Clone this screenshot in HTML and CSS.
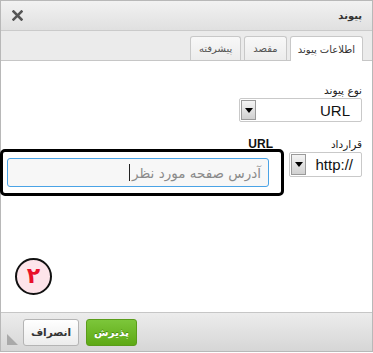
FILE: index.html
```html
<!DOCTYPE html>
<html lang="fa" dir="rtl">
<head>
<meta charset="utf-8">
<link rel="stylesheet" href="styles.css">
</head>
<body>
<div class="dialog">
  <div class="title">
    <span class="title-text">پیوند</span>
    <span class="close">
      <svg width="11" height="11" viewBox="0 0 11 11"><path d="M1.5 1.5L9.5 9.5M9.5 1.5L1.5 9.5" stroke="#555" stroke-width="2.5" stroke-linecap="square"/></svg>
    </span>
  </div>
  <div class="tabs">
    <div class="tab active">اطلاعات پیوند</div>
    <div class="tab">مقصد</div>
    <div class="tab">پیشرفته</div>
  </div>
  <div class="content">
    <div class="label">نوع پیوند</div>
    <div class="select type-select">
      <span class="select-value">URL</span>
      <span class="arrow"><svg width="8" height="5" viewBox="0 0 8 5"><path d="M0 0H8L4 5Z" fill="#000"/></svg></span>
    </div>
    <div class="row">
      <div class="col-proto">
        <div class="label">قرارداد</div>
        <div class="select proto-select">
          <span class="select-value">http://</span>
          <span class="arrow"><svg width="8" height="5" viewBox="0 0 8 5"><path d="M0 0H8L4 5Z" fill="#000"/></svg></span>
        </div>
      </div>
      <div class="col-url">
        <div class="label label-url">URL</div>
        <div class="input"><span class="placeholder">آدرس صفحه مورد نظر</span><span class="caret"></span></div>
      </div>
    </div>
    <div class="highlight"></div>
    <div class="badge">۲</div>
  </div>
  <div class="footer">
    <div class="btn ok">پذیرش</div>
    <div class="btn cancel">انصراف</div>
    <span class="grip"></span>
  </div>
</div>
</body>
</html>
```
FILE: styles.css
```css
html, body {
  margin: 0;
  padding: 0;
  background: #fff;
}
body {
  font-family: "DejaVu Sans", sans-serif;
  font-size: 11px;
  color: #333;
}
.dialog {
  direction: rtl;
  width: 371px;
  height: 350px;
  border: 1px solid #b8b8b8;
  background: #ebebeb;
  display: flex;
  flex-direction: column;
  position: relative;
}
.title {
  height: 29px;
  border-bottom: 1px solid #cacaca;
  background: linear-gradient(#f2f2f2, #e0e0e0);
  display: flex;
  align-items: center;
  padding: 0 10px 0 11px;
}
.title-text {
  font-weight: bold;
  font-size: 10px;
  color: #333;
}
.close {
  margin-right: auto;
  display: flex;
  width: 11px;
  height: 11px;
}
.tabs {
  height: 24px;
  padding-top: 5px;
  padding-right: 9px;
  display: flex;
  align-items: flex-end;
  gap: 3px;
  border-bottom: 1px solid #c6c6c6;
  background: #ebebeb;
}
.tab {
  height: 23px;
  padding: 0 8px;
  border: 1px solid #c8c8c8;
  border-bottom: none;
  border-radius: 3px 3px 0 0;
  background: linear-gradient(#f8f8f8, #ececec);
  color: #555;
  font-size: 10px;
  display: flex;
  align-items: center;
}
.tab.active {
  height: 24px;
  padding: 0 7px;
  background: #fff;
  color: #333;
  margin-bottom: -1px;
}
.content {
  flex: 1;
  background: #fff;
  padding: 21px 10px 0 6px;
  position: relative;
  border-bottom: 1px solid #c6c6c6;
}
.label {
  height: 16px;
  line-height: 16px;
  font-size: 10.5px;
  color: #222;
}
.select {
  box-sizing: border-box;
  border: 1px solid #c9c9c9;
  border-radius: 2px;
  background: #fff;
  display: flex;
  align-items: center;
  padding: 1px;
}
.type-select {
  width: 123px;
  height: 24px;
}
.select-value {
  direction: ltr;
  unicode-bidi: isolate;
  font-family: "Liberation Sans", Arial, sans-serif;
  font-size: 15px;
  color: #111;
  padding-right: 7px;
}
.type-select .select-value {
  padding-right: 10px;
}
.arrow {
  margin-right: auto;
  width: 15px;
  height: 100%;
  box-sizing: border-box;
  border: 1px solid #9a9a9a;
  background: linear-gradient(#f4f4f4, #d0d0d0);
  display: flex;
  align-items: center;
  justify-content: center;
}
.row {
  display: flex;
  gap: 16px;
  margin-top: 14px;
}
.col-proto {
  width: 73px;
}
.proto-select {
  width: 73px;
  height: 25px;
}
.col-url {
  width: 266px;
}
.label-url {
  font-family: "Liberation Sans", Arial, sans-serif;
  font-weight: bold;
  font-size: 12px;
  color: #111;
}
.input {
  box-sizing: border-box;
  width: 262px;
  height: 29px;
  margin-top: 6px;
  margin-right: 4px;
  border: 1px solid #4aa3e6;
  border-radius: 3px;
  background: #f7f7f7;
  display: flex;
  align-items: center;
  padding-right: 7px;
}
.placeholder {
  font-size: 13.5px;
  color: #8a8a8a;
}
.caret {
  width: 1px;
  height: 17px;
  background: #222;
  margin-right: 2px;
}
.highlight {
  position: absolute;
  left: -1px;
  top: 88px;
  width: 278px;
  height: 41px;
  border: 3px solid #000;
  border-radius: 5px;
}
.badge {
  position: absolute;
  left: 14px;
  top: 197px;
  width: 33px;
  height: 33px;
  border: 2px solid #111;
  border-radius: 50%;
  background: #fde4ea;
  color: #e8102a;
  font-weight: bold;
  font-size: 22px;
  line-height: 31px;
  text-align: center;
}
.footer {
  height: 38px;
  background: linear-gradient(#ececec, #d6d6d6);
  display: flex;
  align-items: center;
  gap: 7px;
  padding-left: 22px;
  position: relative;
}
.btn {
  box-sizing: border-box;
  height: 27px;
  border-radius: 3px;
  font-weight: bold;
  font-size: 10.5px;
  display: flex;
  align-items: center;
  justify-content: center;
}
.ok {
  margin-right: auto;
  width: 51px;
  border: 1px solid #5a9c1a;
  background: linear-gradient(#7cc63a, #5ea915);
  color: #fff;
  text-shadow: 0 -1px 0 #4a8a12;
}
.cancel {
  width: 56px;
  border: 1px solid #b4b4b4;
  background: linear-gradient(#ffffff, #ececec);
  color: #333;
}
.grip {
  position: absolute;
  left: 6px;
  bottom: 6px;
  width: 0;
  height: 0;
  border-left: 11px solid #a9a9a9;
  border-top: 11px solid transparent;
}
```
